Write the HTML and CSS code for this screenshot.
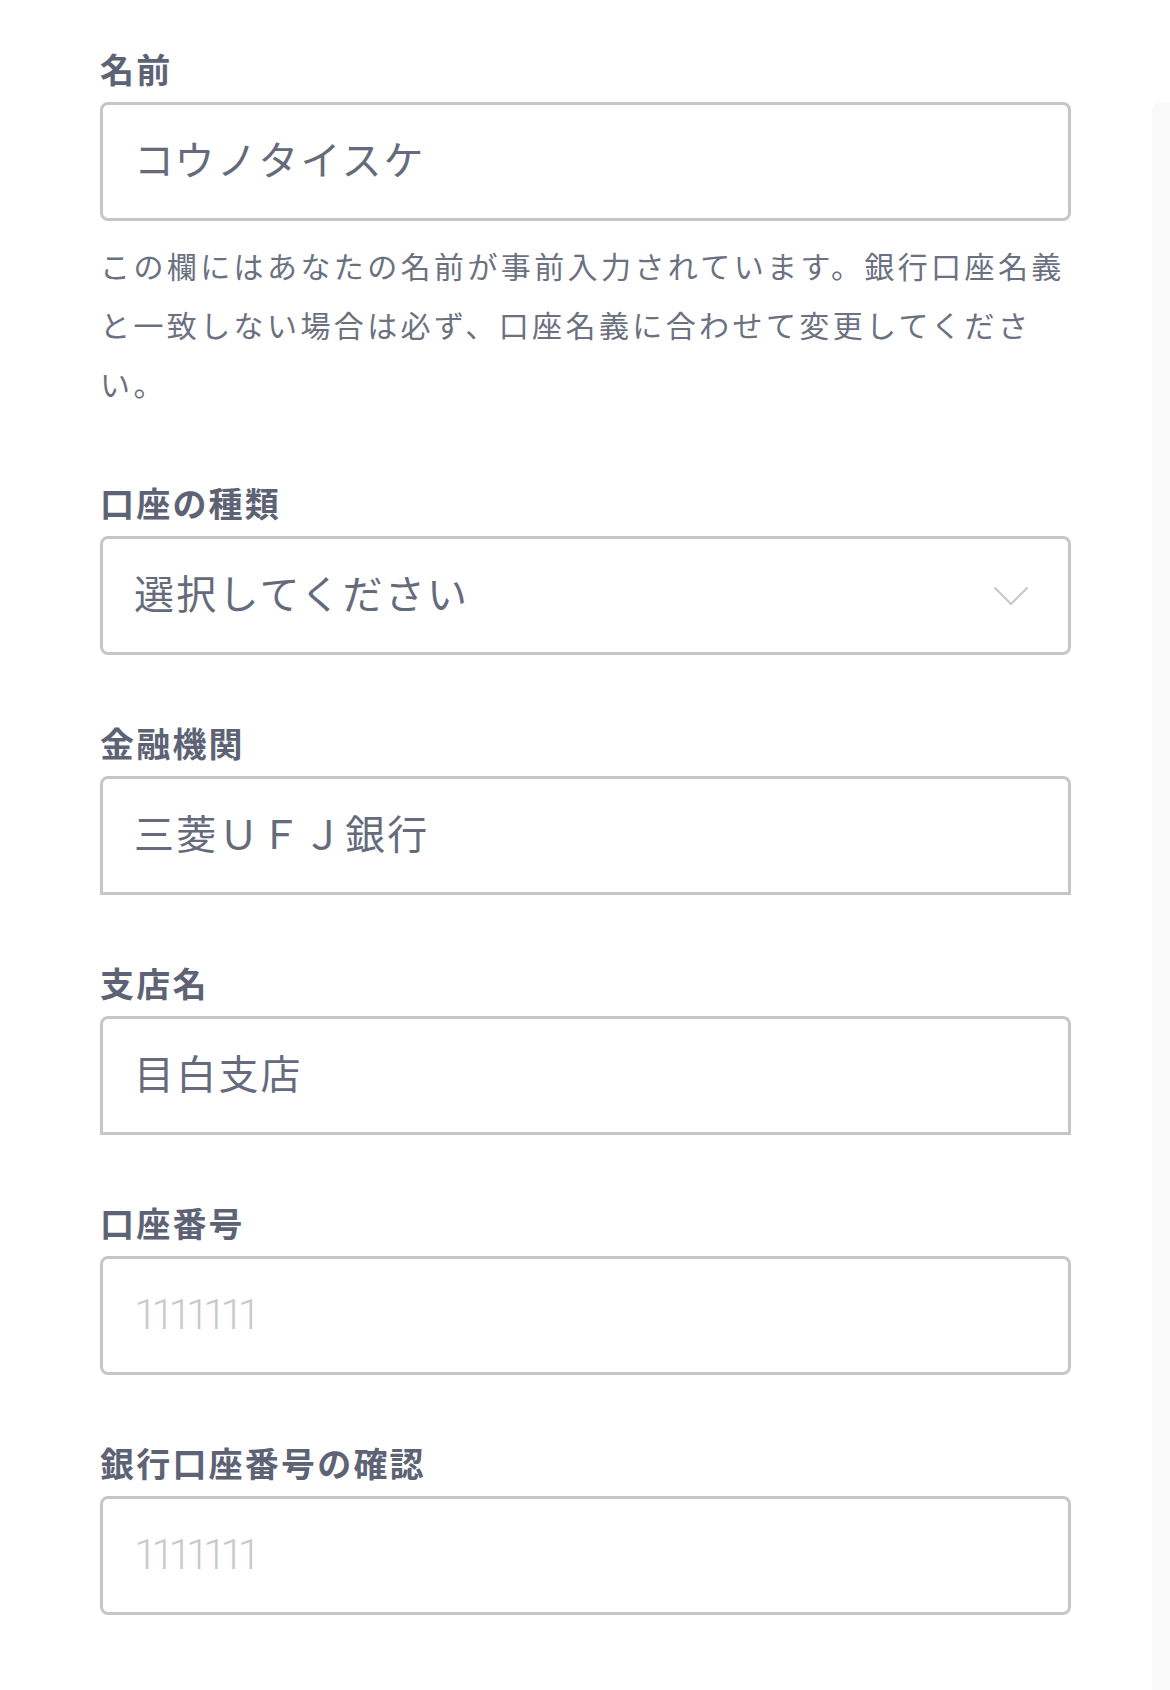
FILE: index.html
```html
<!DOCTYPE html>
<html lang="ja">
<head>
<meta charset="utf-8">
<title>口座情報</title>
<link rel="stylesheet" href="styles.css">
</head>
<body>
<div class="page">
  <main class="form">
    <div class="field">
      <label class="label" for="name">名前</label>
      <input class="control" id="name" type="text" value="コウノタイスケ">
      <p class="help">この欄にはあなたの名前が事前入力されています。銀行口座名義と一致しない場合は必ず、口座名義に合わせて変更してください。</p>
    </div>
    <div class="field">
      <label class="label" for="type">口座の種類</label>
      <div class="select-wrap">
        <select class="control select" id="type">
          <option>選択してください</option>
        </select>
        <svg class="chevron" width="36" height="20" viewBox="0 0 36 20" aria-hidden="true">
          <path d="M1.5 1.5 L18 18 L34.5 1.5" fill="none" stroke="#c8c8c8" stroke-width="2.2"/>
        </svg>
      </div>
    </div>
    <div class="field">
      <label class="label" for="bank">金融機関</label>
      <input class="control control--flat" id="bank" type="text" value="三菱ＵＦＪ銀行">
    </div>
    <div class="field">
      <label class="label" for="branch">支店名</label>
      <input class="control control--flat" id="branch" type="text" value="目白支店">
    </div>
    <div class="field">
      <label class="label" for="number">口座番号</label>
      <input class="control" id="number" type="text" placeholder="1111111">
    </div>
    <div class="field">
      <label class="label" for="confirm">銀行口座番号の確認</label>
      <input class="control" id="confirm" type="text" placeholder="1111111">
    </div>
  </main>
  <div class="edge"></div>
</div>
</body>
</html>
```

FILE: styles.css
```css
* {
  box-sizing: border-box;
}

html, body {
  margin: 0;
  padding: 0;
  background: #ffffff;
}

body {
  font-family: "Noto Sans CJK JP", "Noto Sans", sans-serif;
  color: #656b7b;
}

.page {
  display: flex;
  align-items: flex-start;
  min-height: 1690px;
}

.form {
  flex: 1;
  padding: 49px 81px 0 100px;
}

.edge {
  width: 18px;
  margin-top: 103px;
  height: 1587px;
  background: #f9f9f9;
  border-top-left-radius: 8px;
}

.field {
  margin-bottom: 68px;
}

.label {
  display: block;
  font-size: 34px;
  font-weight: 700;
  line-height: 40px;
  letter-spacing: 2.2px;
  color: #5d6374;
  margin-bottom: 13px;
}

.control {
  display: block;
  width: 100%;
  height: 119px;
  margin: 0;
  padding: 0 31px 7px;
  border: 3px solid #c6c6c6;
  border-radius: 8px;
  background: #ffffff;
  font-family: "Noto Sans CJK JP", "Noto Sans", sans-serif;
  font-size: 40px;
  letter-spacing: 2.2px;
  color: #656b7b;
  outline: none;
}

.control--flat {
  border-radius: 8px 8px 0 0;
}

.control::placeholder {
  font-family: "Roboto", "Liberation Sans", sans-serif;
  font-weight: 300;
  font-size: 42px;
  color: #c9c9c9;
  letter-spacing: -6px;
}

.select-wrap {
  position: relative;
}

.select {
  appearance: none;
  -webkit-appearance: none;
}

.chevron {
  position: absolute;
  right: 42px;
  top: 50%;
  transform: translateY(-50%);
  pointer-events: none;
}

.help {
  margin: 15px -20px 0 0;
  padding-bottom: 2px;
  font-size: 30px;
  line-height: 59px;
  letter-spacing: 3.4px;
  color: #6b7181;
  line-break: strict;
}
```
